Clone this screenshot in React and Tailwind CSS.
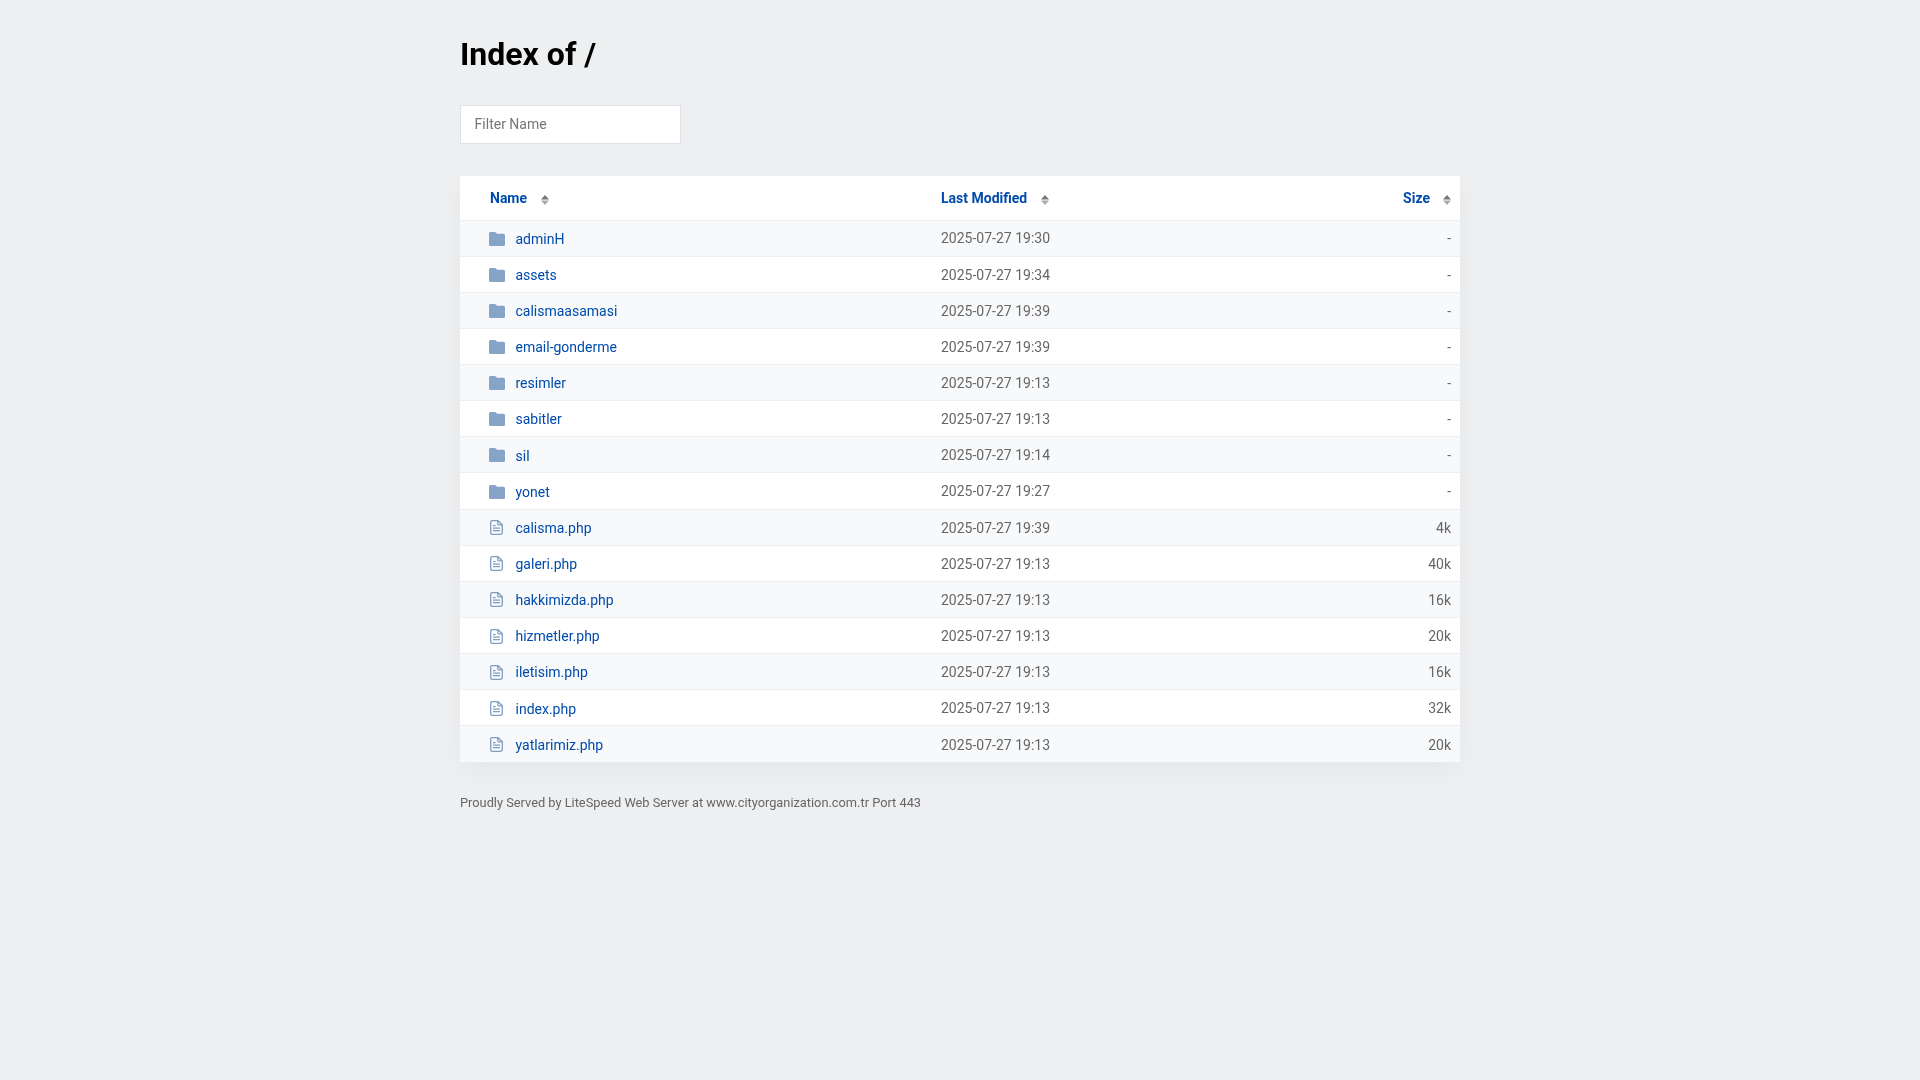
const ENTRIES = [
  { name: "adminH", date: "2025-07-27 19:30", size: "-", dir: true },
  { name: "assets", date: "2025-07-27 19:34", size: "-", dir: true },
  { name: "calismaasamasi", date: "2025-07-27 19:39", size: "-", dir: true },
  { name: "email-gonderme", date: "2025-07-27 19:39", size: "-", dir: true },
  { name: "resimler", date: "2025-07-27 19:13", size: "-", dir: true },
  { name: "sabitler", date: "2025-07-27 19:13", size: "-", dir: true },
  { name: "sil", date: "2025-07-27 19:14", size: "-", dir: true },
  { name: "yonet", date: "2025-07-27 19:27", size: "-", dir: true },
  { name: "calisma.php", date: "2025-07-27 19:39", size: "4k" },
  { name: "galeri.php", date: "2025-07-27 19:13", size: "40k" },
  { name: "hakkimizda.php", date: "2025-07-27 19:13", size: "16k" },
  { name: "hizmetler.php", date: "2025-07-27 19:13", size: "20k" },
  { name: "iletisim.php", date: "2025-07-27 19:13", size: "16k" },
  { name: "index.php", date: "2025-07-27 19:13", size: "32k" },
  { name: "yatlarimiz.php", date: "2025-07-27 19:13", size: "20k" },
];

function FolderIcon() {
  return (
    <svg width="16" height="14" viewBox="0 0 16 14" className="shrink-0">
      <path
        d="M1.6 0h4.1c.5 0 .9.2 1.2.5L8.2 1.8h6.2c.9 0 1.6.7 1.6 1.6v9c0 .9-.7 1.6-1.6 1.6H1.6C.7 14 0 13.3 0 12.4V1.6C0 .7.7 0 1.6 0z"
        fill="#88a3c8"
      />
    </svg>
  );
}

function FileIcon() {
  return (
    <svg width="13" height="15" viewBox="0 0 13 15" fill="none" stroke="#7f9cc4" strokeWidth="1.3" className="shrink-0">
      <path d="M2 .7h6l4.3 4.1v7.8c0 .9-.7 1.7-1.6 1.7H2c-.8 0-1.3-.8-1.3-1.7V2.4C.7 1.5 1.2.7 2 .7z" />
      <path d="M7.8.7v3.1c0 .6.4 1 1 1h3.5" />
      <path d="M3 5.6h2.6M3 8.1h7M3 10.6h7" />
    </svg>
  );
}

function SortIcon() {
  return (
    <svg width="8" height="10" viewBox="0 0 8 10" className="shrink-0 mt-[4px]">
      <path d="M4 0l4 4.4H0z" fill="#777" />
      <path d="M4 10L0 5.6h8z" fill="#aaa" />
    </svg>
  );
}

export default function App() {
  return (
    <div className="min-h-screen bg-[#eeeff1] font-['Roboto',sans-serif] text-sm [will-change:transform]">
      <div className="w-[1000px] ml-[460px]">
        <h1 className="pt-[33px] text-[32px] leading-[42px] font-bold text-black">Index of /</h1>
        <input
          placeholder="Filter Name"
          className="block mt-[30px] w-[221px] h-[39px] pl-[13.6px] pr-[13px] pb-[2px] bg-white border border-[#dee1e5] text-sm placeholder:text-[#757575] outline-none"
        />
        <table className="w-full mt-8 border-collapse bg-white shadow-[0_8px_24px_rgba(0,0,0,0.035)]">
          <thead>
            <tr className="h-[44px] border-b border-[#eceef1] text-[#004bab]">
              <th className="w-[472px] pl-[30px] text-left font-bold">
                <span className="inline-flex items-center gap-[14px]">Name <SortIcon /></span>
              </th>
              <th className="pl-[9px] text-left font-bold">
                <span className="inline-flex items-center gap-[14px]">Last Modified <SortIcon /></span>
              </th>
              <th className="pr-[9px] text-right font-bold">
                <span className="inline-flex items-center gap-[13px]">Size <SortIcon /></span>
              </th>
            </tr>
          </thead>
          <tbody>
            {ENTRIES.map((entry, i) => (
              <tr key={entry.name} className={`h-[36.15px] border-b border-[#eceef1] last:border-b-0 ${i % 2 === 0 ? "bg-[#f8f9fb]" : "bg-white"}`}>
                <td className="pl-[28.5px]">
                  <a href="#" className="flex items-center text-[#004bab]">
                    <span className="w-4 mr-[11px] mt-px flex justify-center">
                      {entry.dir ? <FolderIcon /> : <FileIcon />}
                    </span>
                    <span className="pt-[1.3px]">{entry.name}</span>
                  </a>
                </td>
                <td className="pl-[9px] pt-[0.7px] text-[#666]">{entry.date}</td>
                <td className="pr-[9px] pt-[0.7px] text-right text-[#666]">{entry.size}</td>
              </tr>
            ))}
          </tbody>
        </table>
        <p className="mt-[32px] text-[12.8px] leading-[18px] text-[#666]">
          Proudly Served by LiteSpeed Web Server at www.cityorganization.com.tr Port 443
        </p>
      </div>
    </div>
  );
}
